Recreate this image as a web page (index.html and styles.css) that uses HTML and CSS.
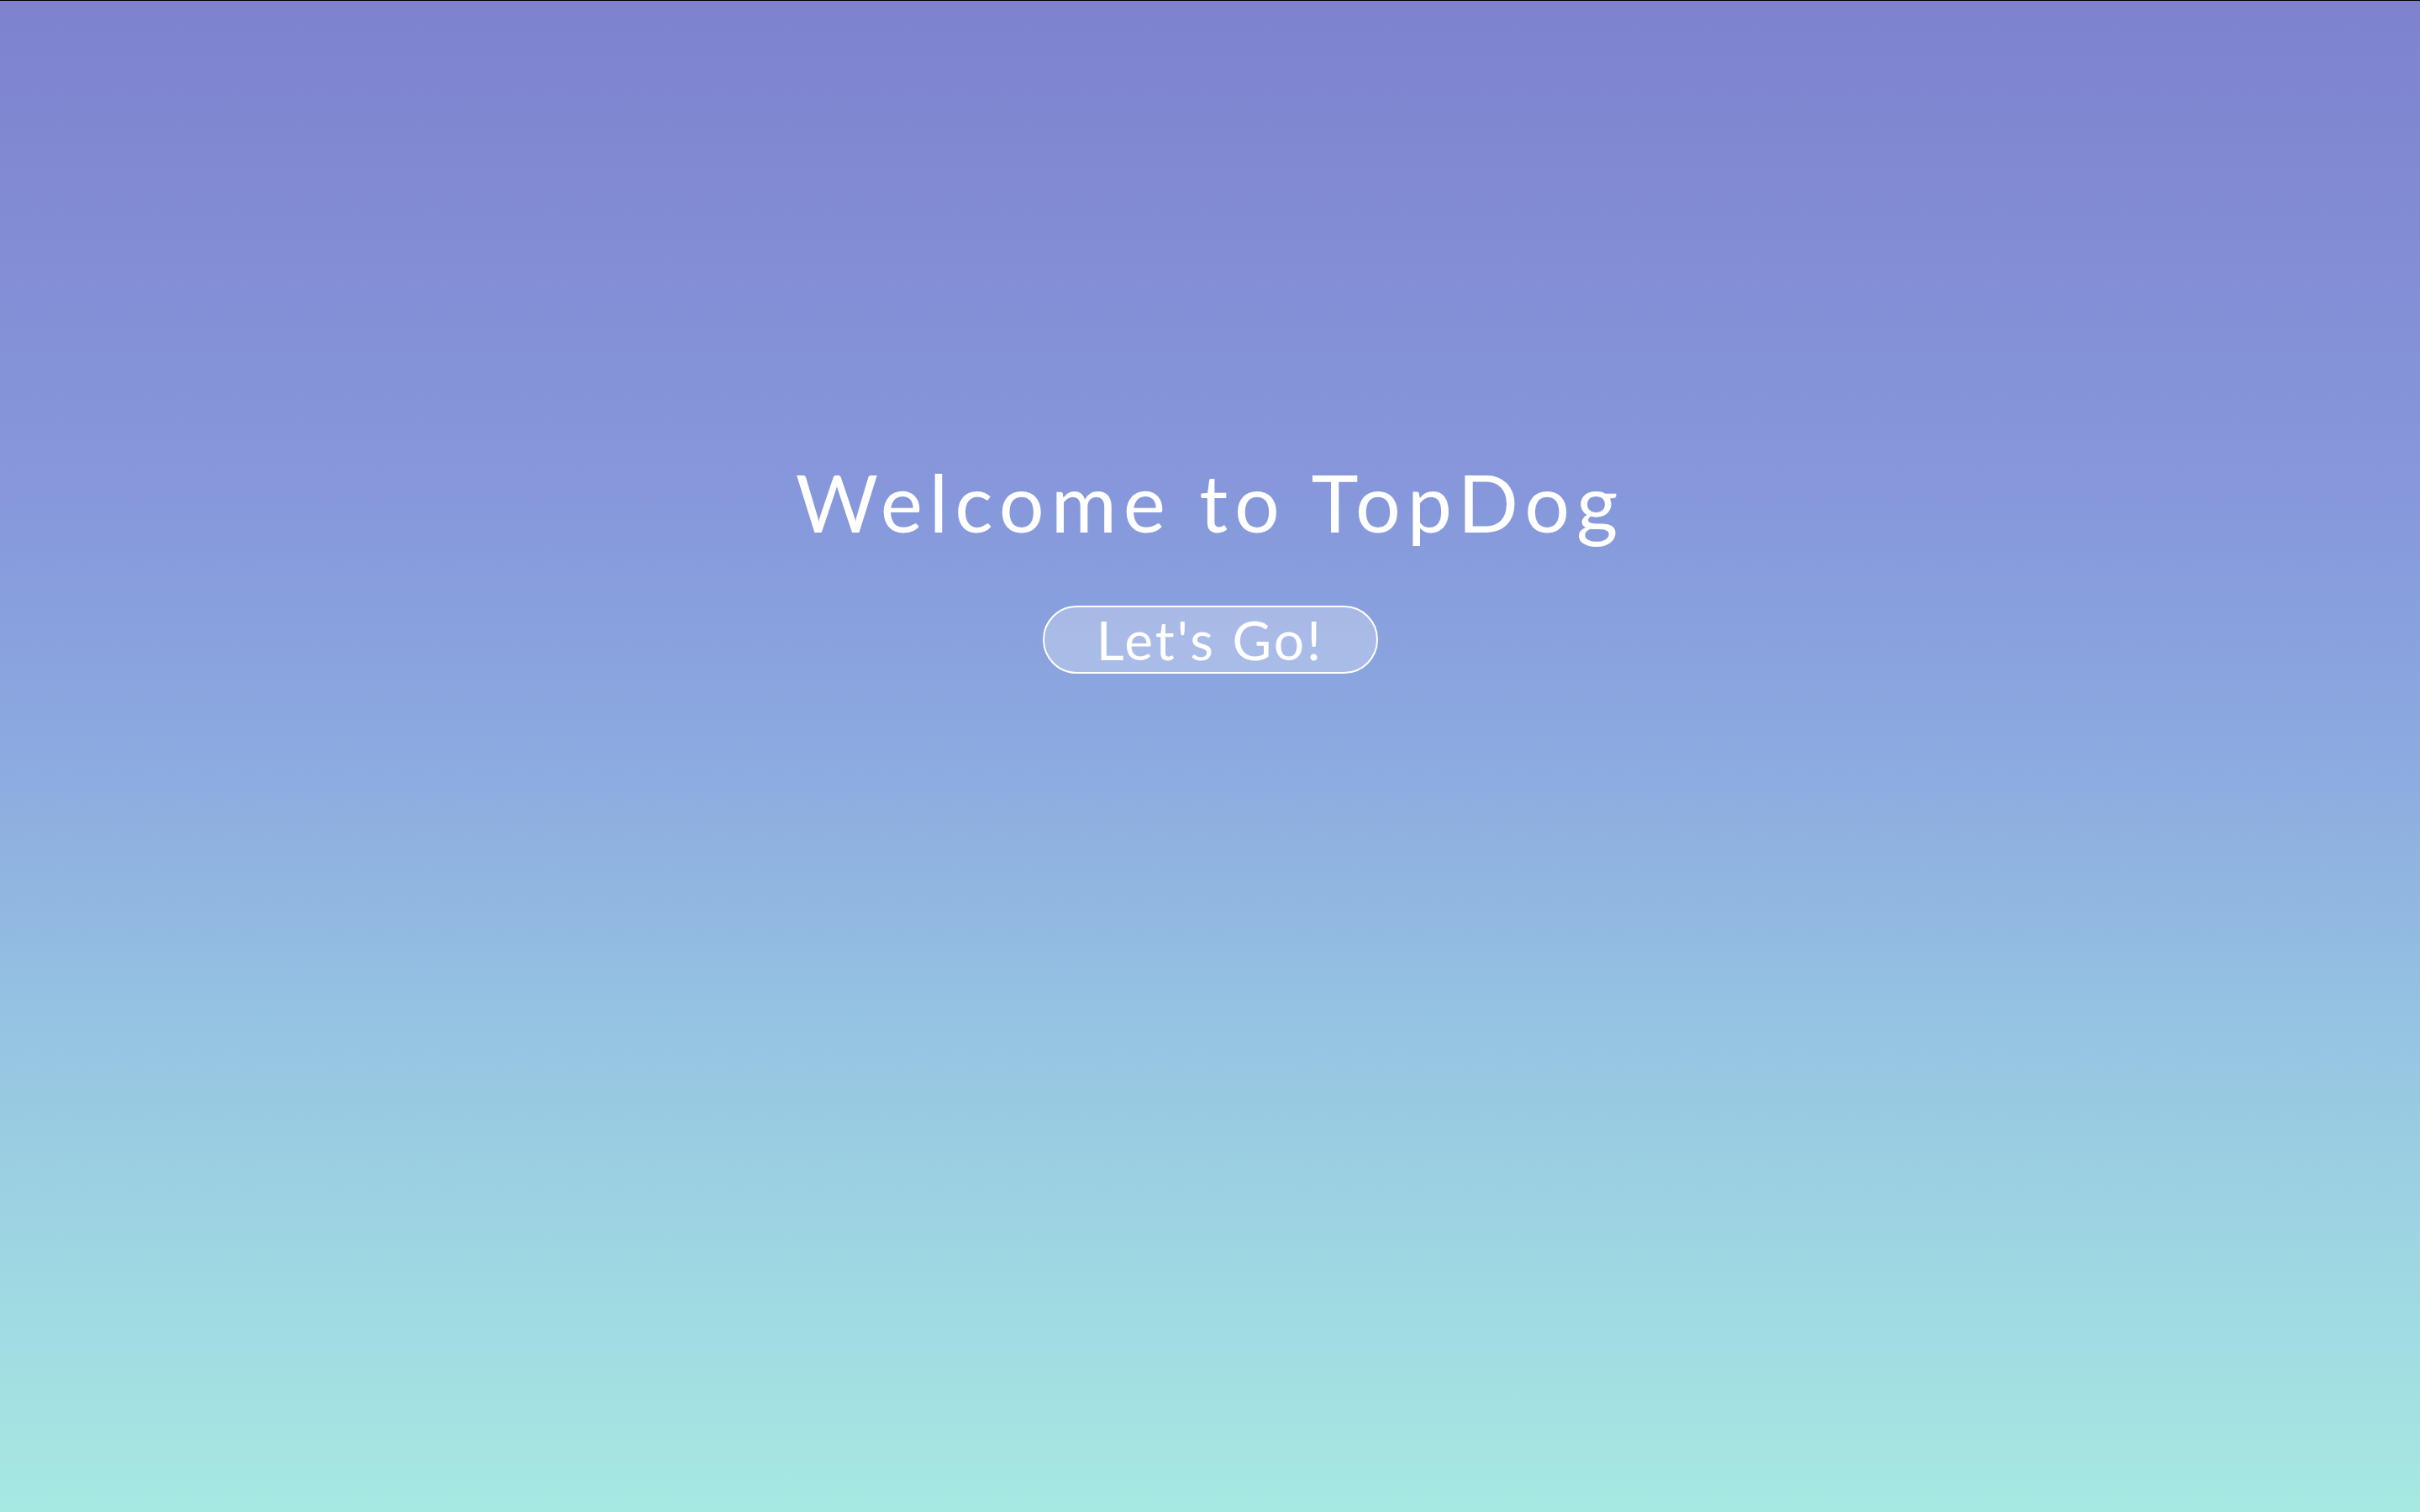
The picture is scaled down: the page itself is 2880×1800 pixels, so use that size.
FILE: index.html
```html
<!DOCTYPE html>
<html lang="en">
<head>
<meta charset="utf-8">
<title>TopDog</title>
<link rel="stylesheet" href="styles.css">
</head>
<body>
<main class="landing">
  <h1 class="landing-title">Welcome to TopDog</h1>
  <button class="landing-button" type="button">Let's Go!</button>
</main>
</body>
</html>
```
FILE: styles.css
```css
html, body {
  margin: 0;
  padding: 0;
  height: 100%;
}
body {
  box-sizing: border-box;
  border-top: 1px solid #000;
  background: linear-gradient(to bottom, #7e82cf 0%, #8698db 33%, #8caae0 50%, #95c2e2 67%, #9ed6e2 83%, #a6e9e2 100%);
  font-family: "Lato", "Liberation Sans", sans-serif;
  color: #fff;
}
.landing {
  display: flex;
  flex-direction: column;
  align-items: center;
  padding-top: 536px;
}
.landing-title {
  margin: 0;
  font-size: 95px;
  font-weight: 400;
  line-height: 120px;
  letter-spacing: 8px;
  color: #fff;
}
.landing-button {
  margin-top: 64px;
  box-sizing: border-box;
  width: 399px;
  height: 81px;
  border: 2px solid #fff;
  border-radius: 41px;
  background: rgba(255, 255, 255, 0.27);
  color: #fff;
  font-family: "Lato", "Liberation Sans", sans-serif;
  font-size: 64px;
  font-weight: 400;
  letter-spacing: 3px;
  line-height: 1;
  padding: 0;
}
```
